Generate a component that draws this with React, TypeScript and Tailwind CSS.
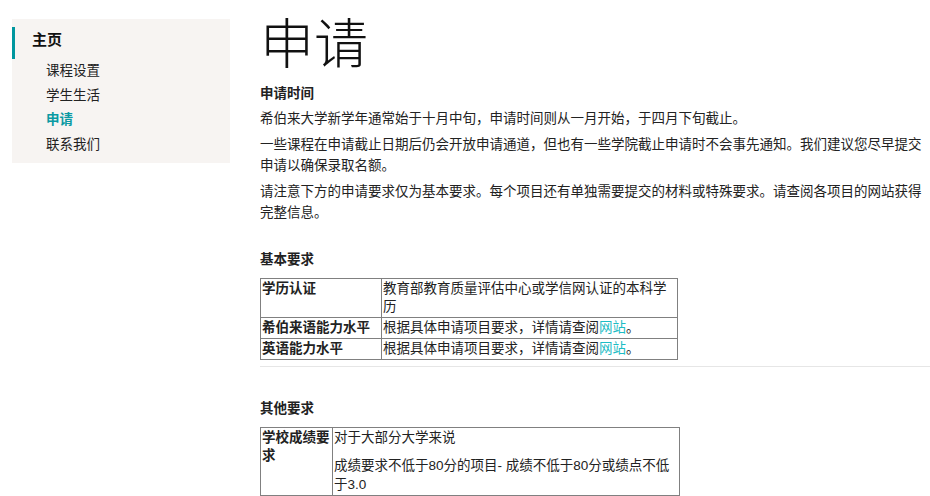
const font = { fontFamily: '"Liberation Sans", "Noto Sans CJK SC", sans-serif' }

function Sidebar() {
  const items = ['课程设置', '学生生活', '申请', '联系我们']
  return (
    <aside className="ml-3 mt-[19px] w-[218px] self-start bg-[#f7f4f2] pb-[6px] pt-2">
      <div className="flex h-8 items-center border-l-[3px] border-[#00979f] pb-[5px] pl-[17px] text-[15px] font-bold text-[#111]">
        主页
      </div>
      <ul className="pl-[34px] text-[13.5px] leading-[24.5px] text-[#222]">
        {items.map((item) => (
          <li key={item} className={item === '申请' ? 'font-bold text-[#0a9aa3]' : ''}>
            {item}
          </li>
        ))}
      </ul>
    </aside>
  )
}

function Link() {
  return <span className="text-[#1dbcc5]">网站</span>
}

export default function App() {
  return (
    <div className="flex min-h-[496px] bg-white text-[#222]" style={font}>
      <Sidebar />
      <main className="ml-[30px] w-[670px] text-[13.5px]">
        <h1 className="mt-[13px] text-[54px] font-light leading-[65px] text-[#111]">申请</h1>
        <h3 className="mt-[6px] font-bold leading-5">申请时间</h3>
        <div className="mt-[4px] leading-[21px]">
          <p className="mb-[5px]">希伯来大学新学年通常始于十月中旬，申请时间则从一月开始，于四月下旬截止。</p>
          <p className="mb-[5px]">
            一些课程在申请截止日期后仍会开放申请通道，但也有一些学院截止申请时不会事先通知。我们建议您尽早提交申请以确保录取名额。
          </p>
          <p className="mb-[5px]">
            请注意下方的申请要求仅为基本要求。每个项目还有单独需要提交的材料或特殊要求。请查阅各项目的网站获得完整信息。
          </p>
        </div>

        <h3 className="mt-[27px] font-bold leading-5">基本要求</h3>
        <table className="mt-[8px] w-[418px] border-collapse border border-[#808080] leading-[18px]">
          <tbody>
            <tr>
              <td className="w-[121px] border border-[#808080] px-px py-px align-top font-bold">学历认证</td>
              <td className="border border-[#808080] px-px py-px align-top">教育部教育质量评估中心或学信网认证的本科学历</td>
            </tr>
            <tr>
              <td className="border border-[#808080] px-px py-px align-top font-bold">希伯来语能力水平</td>
              <td className="border border-[#808080] px-px py-px align-top">
                根据具体申请项目要求，详情请查阅<Link />。
              </td>
            </tr>
            <tr>
              <td className="border border-[#808080] px-px py-px align-top font-bold">英语能力水平</td>
              <td className="border border-[#808080] px-px py-px align-top">
                根据具体申请项目要求，详情请查阅<Link />。
              </td>
            </tr>
          </tbody>
        </table>

        <hr className="mt-[6px] border-t border-[#e6e6e6]" />

        <h3 className="mt-[32px] font-bold leading-5">其他要求</h3>
        <table className="mt-[8px] w-[420px] border-collapse border border-[#808080] leading-[18px]">
          <tbody>
            <tr>
              <td className="w-[72px] border border-[#808080] px-px py-px align-top font-bold">学校成绩要求</td>
              <td className="border border-[#808080] px-px py-px align-top">
                <div>对于大部分大学来说</div>
                <p className="mt-[9px] leading-[19px]">成绩要求不低于80分的项目- 成绩不低于80分或绩点不低于3.0</p>
              </td>
            </tr>
          </tbody>
        </table>
      </main>
    </div>
  )
}
